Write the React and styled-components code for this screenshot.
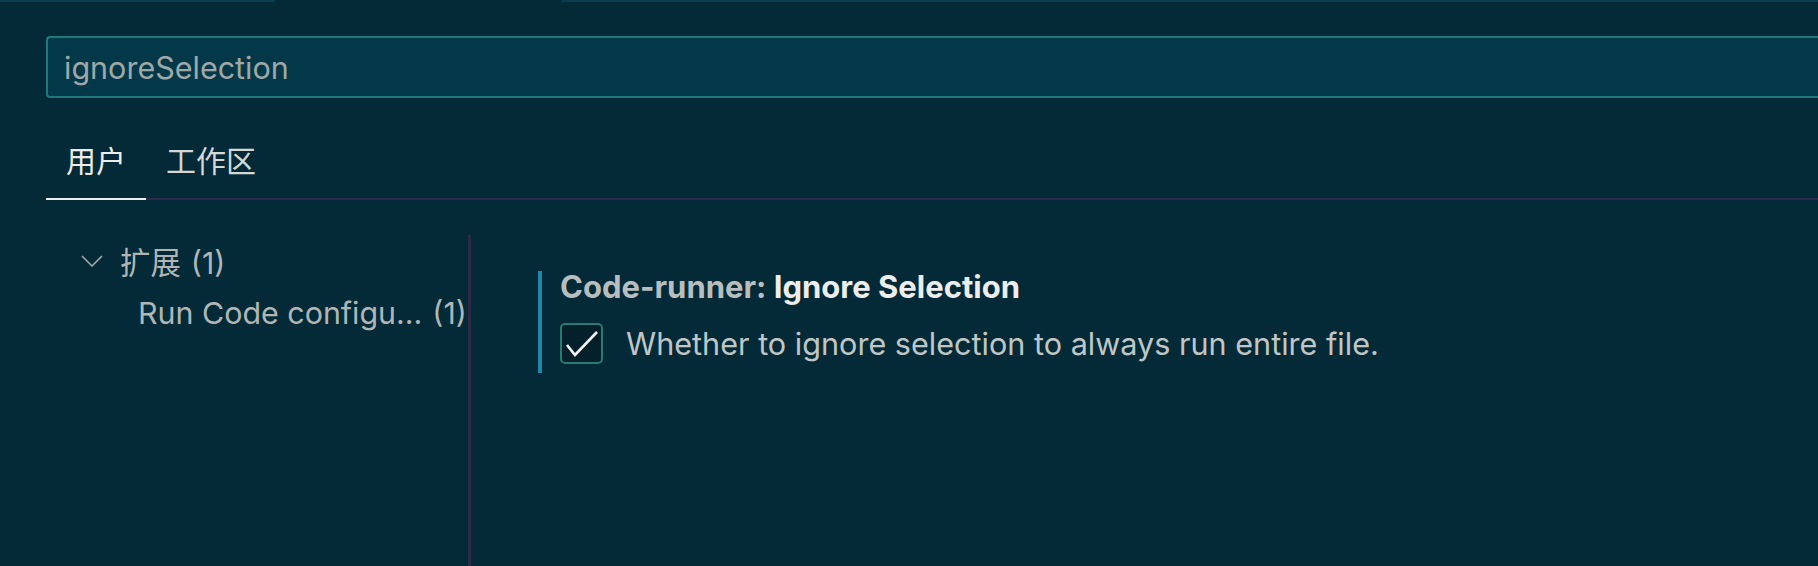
import React from "react";
import styled, { createGlobalStyle } from "styled-components";

const GlobalStyle = createGlobalStyle`
  html, body {
    margin: 0;
    padding: 0;
    background: #032a36;
    overflow: hidden;
  }
`;

const Editor = styled.div`
  height: 566px;
  display: flex;
  flex-flow: column;
  background: #032a36;
  font-family: Inter, "Noto Sans CJK SC", sans-serif;
`;

const TabStrip = styled.div`
  display: flex;
  height: 2px;
`;

const StripSegment = styled.div`
  width: ${p => (p.$w ? p.$w + "px" : "auto")};
  flex: ${p => (p.$w ? "none" : 1)};
  background: ${p => (p.$active ? "transparent" : "#0a3d4f")};
`;

const Header = styled.div`
  padding: 34px 0 0 46px;
`;

const SearchBox = styled.div`
  height: 58px;
  display: flex;
  align-items: center;
  padding-left: 16px;
  border: 2px solid #1e7a7a;
  border-right: none;
  border-radius: 4px 0 0 4px;
  background: #033848;
  color: #9ea8a8;
  font-size: 30.5px;
`;

const TabsBar = styled.div`
  display: flex;
  margin-top: 22px;
  border-bottom: 2px solid #2b2a4a;
`;

const Tab = styled.div`
  box-sizing: border-box;
  height: 80px;
  margin-bottom: -2px;
  padding: 0 20px;
  display: flex;
  align-items: center;
  font-size: 30px;
  color: ${p => (p.$active ? "#ececec" : "#d6d8d8")};
  border-bottom: 2px solid ${p => (p.$active ? "#efefef" : "transparent")};
`;

const Body = styled.div`
  flex: 1;
  display: flex;
  padding: 35px 0 0 46px;
  min-height: 0;
`;

const Tree = styled.div`
  width: 422px;
  flex: none;
  display: flex;
  flex-flow: column;
`;

const TreeRow = styled.div`
  height: 52px;
  display: flex;
  align-items: center;
  gap: 17px;
  padding-left: ${p => p.$indent}px;
  font-size: 30.4px;
  color: #b0b6b6;
  white-space: nowrap;
`;

const Count = styled.span`
  margin-left: 10px;
`;

const SettingsPane = styled.div`
  flex: 1;
  border-left: 3px solid #2d2a48;
  padding: 36px 0 0 67px;
`;

const SettingItem = styled.div`
  border-left: 4px solid #1f86a8;
  padding: 0 0 9px 18px;
`;

const SettingTitle = styled.div`
  line-height: 32px;
  font-size: 31px;
  font-weight: 700;
  color: #b8bebe;
`;

const SettingName = styled.span`
  color: #ededed;
`;

const CheckRow = styled.div`
  display: flex;
  align-items: center;
  gap: 23px;
  margin-top: 20px;
`;

const CheckBox = styled.div`
  box-sizing: border-box;
  width: 43px;
  height: 41px;
  border: 2px solid #2a7a74;
  border-radius: 5px;
  background: #04212b;
  display: flex;
  align-items: center;
  justify-content: center;
`;

const Description = styled.div`
  font-size: 30.6px;
  color: #c0c6c6;
`;

const Chevron = () => (
  <svg width="22" height="12" viewBox="0 0 22 12">
    <polyline points="1,1 11,11 21,1" fill="none" stroke="#a0a8a8" strokeWidth="1.6" />
  </svg>
);

const Check = () => (
  <svg width="43" height="41" viewBox="0 0 43 41" style={{ margin: -2 }}>
    <polyline points="7,22 15,32 37,9" fill="none" stroke="#f4f4f4" strokeWidth="2.6" />
  </svg>
);

const App = () => {
  return (
    <Editor>
      <GlobalStyle />
      <TabStrip>
        <StripSegment $w={275} />
        <StripSegment $w={287} $active />
        <StripSegment />
      </TabStrip>
      <Header>
        <SearchBox>ignoreSelection</SearchBox>
        <TabsBar>
          <Tab $active>用户</Tab>
          <Tab>工作区</Tab>
        </TabsBar>
      </Header>
      <Body>
        <Tree>
          <TreeRow $indent={35}>
            <Chevron />
            <span>
              扩展<Count>(1)</Count>
            </span>
          </TreeRow>
          <TreeRow $indent={92}>
            <span>
              Run Code configu...<Count>(1)</Count>
            </span>
          </TreeRow>
        </Tree>
        <SettingsPane>
          <SettingItem>
            <SettingTitle>
              Code-runner: <SettingName>Ignore Selection</SettingName>
            </SettingTitle>
            <CheckRow>
              <CheckBox>
                <Check />
              </CheckBox>
              <Description>Whether to ignore selection to always run entire file.</Description>
            </CheckRow>
          </SettingItem>
        </SettingsPane>
      </Body>
    </Editor>
  );
};

export default App;
